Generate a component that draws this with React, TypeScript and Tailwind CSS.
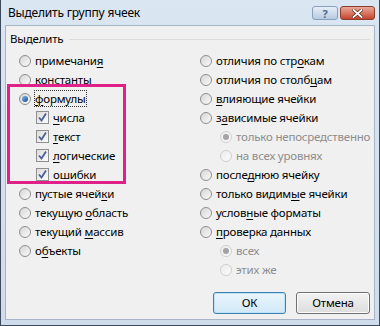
import React from 'react';

const font = { fontFamily: '"Noto Sans", "Open Sans", sans-serif' };

// text with one underlined accelerator letter
const Label = ({ text = "", hot = -1 }: { text?: string; hot?: number }) => {
  if (hot < 0) return <span>{text}</span>;
  return (
    <span>
      {text.slice(0, hot)}
      <span className="underline underline-offset-2">{text[hot]}</span>
      {text.slice(hot + 1)}
    </span>
  );
};

const Radio = ({ checked = false, disabled = false }) => (
  <span
    className={`relative flex h-[12px] w-[12px] shrink-0 items-center justify-center rounded-full border ${
      disabled ? 'border-[#cfcfcf] bg-gradient-to-br from-[#ececec] to-[#fbfbfb]' : 'border-[#8f8f8f] bg-gradient-to-br from-[#d6d6d6] to-[#fafafa]'
    }`}
  >
    {checked && (
      <span
        className={`h-[6px] w-[6px] rounded-full ${
          disabled ? 'bg-[#a3a3a3]' : 'bg-gradient-to-br from-[#7bb6ee] to-[#174f93]'
        }`}
      />
    )}
  </span>
);

const Check = () => (
  <span className="flex h-[13px] w-[13px] shrink-0 items-center justify-center border border-[#8e8f8f] bg-gradient-to-br from-[#dcdcdc] to-[#fbfbfb]">
    <svg width="11" height="11" viewBox="0 0 11 11">
      <path d="M2 5.5 L4.5 8.5 L9 1.5" fill="none" stroke="#4a5f97" strokeWidth="1.8" />
    </svg>
  </span>
);

type Row = { t: string; h?: number; kind?: 'r' | 'c'; on?: boolean; off?: boolean; indent?: boolean; focus?: boolean };

const leftRows: Row[] = [
  { t: 'примечания', h: 9 },
  { t: 'константы' },
  { t: 'формулы', h: 0, on: true, focus: true },
  { t: 'числа', h: 0, kind: 'c' },
  { t: 'текст', h: 0, kind: 'c' },
  { t: 'логические', h: 0, kind: 'c' },
  { t: 'ошибки', h: 1, kind: 'c' },
  { t: 'пустые ячейки', h: 11 },
  { t: 'текущую область', h: 8 },
  { t: 'текущий массив', h: 8 },
  { t: 'объекты', h: 1 },
];

const rightRows: Row[] = [
  { t: 'отличия по строкам', h: 14 },
  { t: 'отличия по столбцам', h: 16 },
  { t: 'влияющие ячейки', h: 0 },
  { t: 'зависимые ячейки', h: 1 },
  { t: 'только непосредственно', indent: true, off: true, on: true },
  { t: 'на всех уровнях', indent: true, off: true },
  { t: 'последнюю ячейку', h: 5 },
  { t: 'только видимые ячейки', h: 12 },
  { t: 'условные форматы', h: 5 },
  { t: 'проверка данных', h: 0 },
  { t: 'всех', indent: true, off: true, on: true },
  { t: 'этих же', indent: true, off: true },
];

const Item = ({ r }: { r: Row }) => (
  <div
    className={`flex h-[19px] items-center whitespace-nowrap ${r.kind === 'c' ? 'gap-[4px] pl-[17px]' : 'gap-[4px]'} ${
      r.indent ? 'pl-[20px]' : ''
    } ${r.off ? 'text-[#8d8d8d]' : 'text-black'}`}
  >
    {r.kind === 'c' ? <Check /> : <Radio checked={r.on} disabled={r.off} />}
    <span className={`leading-[15px] ${r.focus ? 'outline-1 outline-dotted outline-[#333]' : ''}`}>
      <Label text={r.t} hot={r.h ?? -1} />
    </span>
  </div>
);

export default function App() {
  return (
    <div
      className="relative flex h-[326px] w-[380px] flex-col border-l border-r border-b border-[#3c4a5c] bg-gradient-to-b from-[#dbe6f3] to-[#cfdcec] text-[11.5px] tracking-[-0.2px]"
      style={font}
    >
      {/* Title bar */}
      <div className="flex h-[25px] shrink-0 items-center justify-between pl-[7px] pr-[4px]">
        <span className="text-[12px] text-black">Выделить группу ячеек</span>
        <div className="flex gap-[2px] self-start pt-[6px]">
          <div className="flex h-[14px] w-[26px] items-center justify-center rounded-[3px] border border-[#8a9fb9] bg-gradient-to-b from-[#e6eef8] to-[#b9cbe1] text-[11px] font-bold leading-none text-[#4d6888]">
            ?
          </div>
          <div className="flex h-[14px] w-[35px] items-center justify-center rounded-[3px] border border-[#8c3d30] bg-gradient-to-b from-[#e8a898] to-[#c5422c]">
            <svg width="11" height="9" viewBox="0 0 11 9">
              <path d="M1.5 1 L9.5 8 M9.5 1 L1.5 8" stroke="#5a2418" strokeWidth="3.2" strokeLinecap="square" />
              <path d="M1.5 1 L9.5 8 M9.5 1 L1.5 8" stroke="#ffffff" strokeWidth="1.8" strokeLinecap="square" />
            </svg>
          </div>
        </div>
      </div>

      {/* Client */}
      <div className="mx-[4px] mb-[5px] flex flex-1 flex-col border border-[#a7b5c6] bg-[#f0f0f0] pt-[5px]">
        <div className="flex h-[16px] items-center gap-[6px] pl-[4px] pr-[4px] leading-[16px] text-black">
          <span>Выделить</span>
          <div className="mt-[1px] h-px flex-1 bg-[#dcdcdc]" />
        </div>

        <div className="mt-[4px] flex pl-[13px]">
          <div className="flex w-[181px] flex-col">
            {leftRows.map((r) => (
              <Item key={r.t} r={r} />
            ))}
          </div>
          <div className="flex flex-col">
            {rightRows.map((r) => (
              <Item key={r.t} r={r} />
            ))}
          </div>
        </div>

        <div className="mt-auto mb-[5px] flex justify-end gap-[10px] pr-[4px]">
          <button className="h-[22px] w-[73px] rounded-[3px] border border-[#3c7fb1] bg-gradient-to-b from-[#eaf6fd] to-[#d1e8f7] text-black shadow-[inset_0_0_0_1px_#bfe2f8]">
            ОК
          </button>
          <button className="h-[22px] w-[74px] rounded-[3px] border border-[#707070] bg-gradient-to-b from-[#f2f2f2] to-[#dddddd] text-black shadow-[inset_0_0_0_1px_#fcfcfc]">
            Отмена
          </button>
        </div>
      </div>

      {/* highlight annotation */}
      <div className="pointer-events-none absolute left-[6px] top-[84px] h-[100px] w-[119px] border-[3px] border-[#e0218a]" />
    </div>
  );
}
